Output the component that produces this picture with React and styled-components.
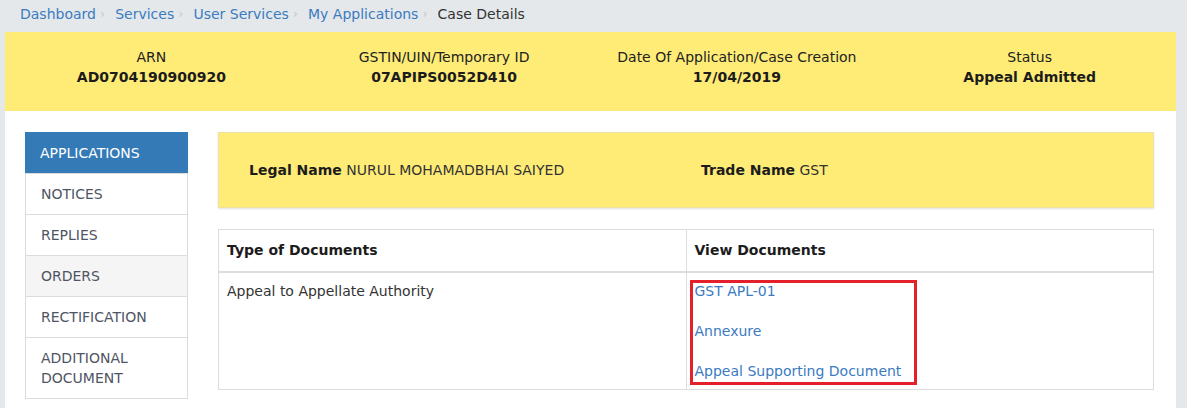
import React from "react";
import styled, { createGlobalStyle } from "styled-components";

const GlobalStyle = createGlobalStyle`
  html, body { margin: 0; padding: 0; }
  body {
    background: #e4e8eb;
    font-family: "DejaVu Sans", Verdana, sans-serif;
    font-size: 14px;
    color: #333;
  }
  * { box-sizing: border-box; }
`;

const Page = styled.div`
  padding: 0 11px 10px 5px;
`;

const Breadcrumb = styled.nav`
  display: flex;
  align-items: center;
  height: 32px;
  padding: 0 0 4px 15px;
  font-size: 14px;
  line-height: 20px;
`;

const Crumb = styled.span`
  color: ${(p) => (p.$active ? "#333" : "#3b7bbf")};
`;

const Sep = styled.span`
  color: #c4c8cc;
  font-size: 13px;
  padding: 0 10px 0 4px;
`;

const Sheet = styled.div`
  background: #fff;
`;

const Band = styled.div`
  display: grid;
  grid-template-columns: repeat(4, 1fr);
  background: #ffec77;
  padding: 15px 0 24px;
  line-height: 20px;
  text-align: center;
`;

const BandItem = styled.div`
  display: flex;
  flex-direction: column;
  color: #222;
`;

const BandValue = styled.strong`
  font-weight: bold;
  color: #1c1c1c;
`;

const Body = styled.div`
  display: flex;
  gap: 30px;
  padding: 21px 22px 10px 20px;
`;

const Side = styled.ul`
  list-style: none;
  margin: 0;
  padding: 0;
  width: 163px;
  flex: none;
  align-self: flex-start;
  border: 1px solid #dcdcdc;
  border-top: none;
`;

const SideItem = styled.li`
  padding: 10px 15px;
  line-height: 20px;
  font-size: 14px;
  text-transform: uppercase;
  color: ${(p) => (p.$active ? "#fff" : "#4e5563")};
  background: ${(p) => (p.$active ? "#337ab7" : p.$shade ? "#f5f5f5" : "#fff")};
  border-top: 1px solid ${(p) => (p.$active ? "#337ab7" : "#dcdcdc")};
  margin: ${(p) => (p.$active ? "0 -1px" : "0")};
  & + & { border-top-color: #dcdcdc; }
`;

const Main = styled.div`
  flex: 1;
  display: flex;
  flex-direction: column;
  gap: 21px;
`;

const NamePanel = styled.div`
  display: grid;
  grid-template-columns: 1fr 1fr;
  align-items: center;
  height: 76px;
  padding: 0 15px;
  background: #ffec77;
  border: 1px solid #ece2a4;
  box-shadow: 0 1px 2px rgba(0, 0, 0, 0.12);
  line-height: 20px;
`;

const NameField = styled.div`
  padding: 0 15px;
  color: #333;
  b { color: #1c1c1c; }
`;

const Table = styled.table`
  width: 100%;
  border-collapse: collapse;
  border: 1px solid #dddddd;
  table-layout: fixed;
`;

const Th = styled.th`
  text-align: left;
  font-weight: bold;
  color: #1c1c1c;
  padding: 10px 8px 11px;
  line-height: 20px;
  border: 1px solid #dddddd;
  border-bottom: 2px solid #dddddd;
`;

const Td = styled.td`
  vertical-align: top;
  padding: 8px 8px 8px;
  line-height: 20px;
  border: 1px solid #dddddd;
  color: #333;
`;

const Links = styled.div`
  position: relative;
  display: flex;
  flex-direction: column;
  gap: 20px;
`;

const DocLink = styled.a`
  color: #3b7bbf;
  text-decoration: none;
`;

const Highlight = styled.div`
  position: absolute;
  top: -1px;
  left: -5px;
  width: 227px;
  height: 105px;
  border: 3px solid #e4202b;
  pointer-events: none;
`;

const crumbs = ["Dashboard", "Services", "User Services", "My Applications"];
const band = [
  ["ARN", "AD0704190900920"],
  ["GSTIN/UIN/Temporary ID", "07APIPS0052D410"],
  ["Date Of Application/Case Creation", "17/04/2019"],
  ["Status", "Appeal Admitted"],
];
const sideItems = ["Applications", "Notices", "Replies", "Orders", "Rectification", "Additional Document"];

export default function App() {
  return (
    <>
      <GlobalStyle />
      <Page>
        <Breadcrumb>
          {crumbs.map((c) => (
            <React.Fragment key={c}>
              <Crumb>{c}</Crumb>
              <Sep>›</Sep>
            </React.Fragment>
          ))}
          <Crumb $active>Case Details</Crumb>
        </Breadcrumb>
        <Sheet>
          <Band>
            {band.map(([l, v]) => (
              <BandItem key={l}>
                <span>{l}</span>
                <BandValue>{v}</BandValue>
              </BandItem>
            ))}
          </Band>
          <Body>
            <Side>
              {sideItems.map((s, i) => (
                <SideItem key={s} $active={i === 0} $shade={s === "Orders"}>
                  {s}
                </SideItem>
              ))}
            </Side>
            <Main>
              <NamePanel>
                <NameField>
                  <b>Legal Name</b> NURUL MOHAMADBHAI SAIYED
                </NameField>
                <NameField>
                  <b>Trade Name</b> GST
                </NameField>
              </NamePanel>
              <Table>
                <thead>
                  <tr>
                    <Th>Type of Documents</Th>
                    <Th>View Documents</Th>
                  </tr>
                </thead>
                <tbody>
                  <tr>
                    <Td>Appeal to Appellate Authority</Td>
                    <Td>
                      <Links>
                        <DocLink href="#">GST APL-01</DocLink>
                        <DocLink href="#">Annexure</DocLink>
                        <DocLink href="#">Appeal Supporting Document</DocLink>
                        <Highlight />
                      </Links>
                    </Td>
                  </tr>
                </tbody>
              </Table>
            </Main>
          </Body>
        </Sheet>
      </Page>
    </>
  );
}
